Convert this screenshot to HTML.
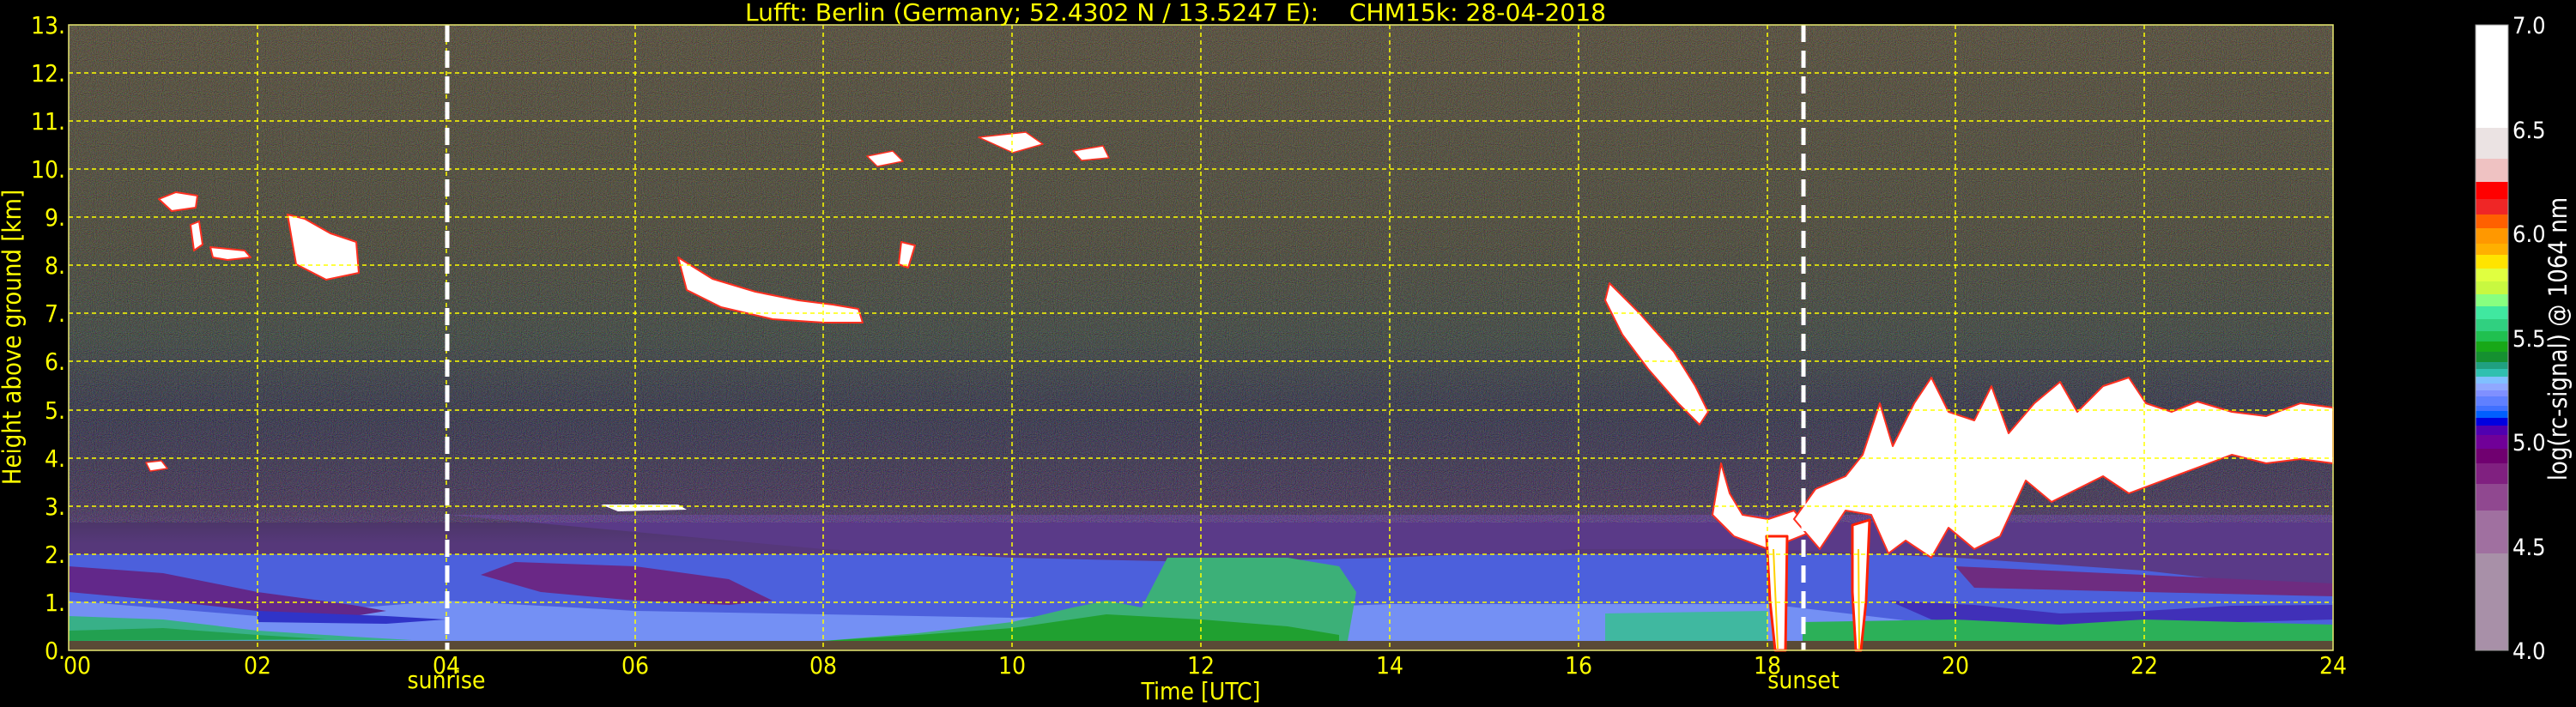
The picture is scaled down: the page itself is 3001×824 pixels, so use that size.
<!DOCTYPE html>
<html><head><meta charset="utf-8"><style>
html,body{margin:0;padding:0;background:#000;}
svg{display:block;}
text{font-family:"DejaVu Sans Condensed","DejaVu Sans","Liberation Sans",sans-serif;}
</style></head><body>
<svg width="3001" height="824" viewBox="0 0 3001 824" xmlns="http://www.w3.org/2000/svg">
<defs>
<linearGradient id="bg" x1="0" y1="29" x2="0" y2="758" gradientUnits="userSpaceOnUse">
<stop offset="0" stop-color="#544c38"/>
<stop offset="0.35" stop-color="#4a4838"/>
<stop offset="0.5" stop-color="#3e4640"/>
<stop offset="0.62" stop-color="#34344a"/>
<stop offset="0.76" stop-color="#423456"/>
<stop offset="0.83" stop-color="#56387a"/>
<stop offset="1" stop-color="#56387a"/>
</linearGradient>
<filter id="nz" x="0" y="0" width="100%" height="100%">
<feTurbulence type="fractalNoise" baseFrequency="0.95" numOctaves="1" seed="3"/>
<feColorMatrix type="matrix" values="3 0 0 0 -1.2  0 3 0 0 -1.2  0 0 3 0 -1.2  0 0 0 0 0.18"/>
</filter>
</defs>

<rect x="80" y="29" width="2638" height="729" fill="url(#bg)"/>

<!-- blue layer 0.2-2 km -->
<polygon fill="#4c60dc" points="80,646 2718,646 2718,747 80,747"/>
<polygon fill="#5a3a88" points="80,600 520,600 740,620 959,640 1179,650 1399,655 1619,650 1839,640 2059,640 2278,650 2498,665 2718,690 2718,600"/>
<polygon fill="#7490f4" points="80,700 300,718 520,700 740,712 959,716 1179,720 1619,704 1839,704 2059,704 2278,730 2718,730 2718,747 80,747"/>
<polygon fill="#62288a" points="80,660 190,668 300,690 410,705 450,712 400,720 300,712 190,700 80,690"/>
<polygon fill="#6a2886" points="600,655 740,660 849,675 900,700 849,705 740,700 630,690 560,670"/>
<polygon fill="#3034c8" points="300,712 450,718 520,722 450,727 300,725"/>
<polygon fill="#4030b8" points="2200,700 2300,705 2400,715 2498,712 2600,706 2718,705 2718,722 2500,728 2350,730 2250,722"/>
<polygon fill="#6e2c80" points="2278,660 2718,680 2718,695 2500,690 2300,685"/>

<polygon fill="#38b088" points="80,718 190,722 300,735 410,742 480,746 80,747"/>
<polygon fill="#22a050" points="80,735 190,732 300,740 380,745 80,747"/>
<polygon fill="#3cb078" points="959,747 1069,738 1179,725 1250,708 1289,700 1330,708 1360,650 1500,650 1560,660 1580,690 1570,747"/>
<polygon fill="#20a030" points="959,747 1069,740 1179,732 1289,716 1400,722 1500,730 1560,740 1560,747"/>
<polygon fill="#40b8a0" points="1870,747 1870,715 2059,712 2059,747"/>
<polygon fill="#2cb058" points="2100,747 2100,725 2278,722 2400,728 2498,722 2718,728 2718,747"/>

<rect x="80" y="747" width="2638" height="11" fill="#5a4a36"/>

<rect x="80" y="29" width="2638" height="580" filter="url(#nz)"/>

<g fill="#ffffff" stroke="#ff3020" stroke-width="2" stroke-linejoin="round">
<polygon points="185,232 205,224 230,228 228,242 200,246"/>
<polygon points="222,262 232,258 236,285 226,292"/>
<polygon points="245,288 285,292 292,300 265,303 248,300"/>
<polygon points="335,250 355,255 385,272 415,282 418,318 380,326 345,308"/>
<polygon points="790,300 830,325 880,340 930,350 970,355 1000,360 1005,376 960,376 900,372 840,358 800,338"/>
<polygon points="1050,282 1066,286 1058,312 1047,308"/>
<polygon points="1010,182 1040,176 1052,188 1022,194" stroke-width="1.5"/>
<polygon points="1140,160 1195,154 1215,168 1180,178" stroke-width="1.5"/>
<polygon points="1250,176 1285,170 1292,184 1260,187" stroke-width="1.5"/>
<polygon points="170,539 188,537 195,546 175,549" stroke-width="1.5"/>
<polygon points="1875,330 1910,365 1950,410 1975,450 1990,480 1980,495 1955,470 1920,430 1890,390 1870,350"/>
<polygon points="2005,540 2015,575 2030,600 2060,605 2090,595 2110,620 2060,640 2020,625 1995,600"/>
<polygon points="2090,605 2115,570 2150,555 2170,530 2190,470 2205,520 2230,470 2250,440 2270,480 2300,490 2320,450 2340,505 2370,470 2400,445 2420,480 2450,450 2480,440 2500,470 2530,480 2560,468 2600,480 2640,485 2680,470 2718,475 2718,540 2680,535 2640,540 2600,530 2560,545 2520,560 2480,575 2450,555 2420,570 2390,585 2360,560 2330,625 2300,640 2270,615 2250,650 2220,630 2200,645 2180,600 2150,595 2120,640"/>
<polygon points="2058,625 2082,625 2080,758 2068,758 2062,700" stroke="#ff2000" stroke-width="3"/>
<polygon points="2158,612 2178,606 2174,700 2168,758 2162,758 2158,690" stroke="#ff2000" stroke-width="3"/>
</g>
<g stroke="#ffd000" stroke-width="2" fill="none">
<line x1="2066" y1="640" x2="2071" y2="756"/>
<line x1="2165" y1="640" x2="2166" y2="756"/>
</g>
<polygon fill="#ffffff" points="700,588 790,588 800,594 720,596"/>

<g stroke="#ffff00" stroke-width="1.5" stroke-dasharray="5,4">
<line x1="80" y1="85" x2="2718" y2="85"/>
<line x1="80" y1="141" x2="2718" y2="141"/>
<line x1="80" y1="197" x2="2718" y2="197"/>
<line x1="80" y1="253" x2="2718" y2="253"/>
<line x1="80" y1="309" x2="2718" y2="309"/>
<line x1="80" y1="365" x2="2718" y2="365"/>
<line x1="80" y1="421" x2="2718" y2="421"/>
<line x1="80" y1="478" x2="2718" y2="478"/>
<line x1="80" y1="534" x2="2718" y2="534"/>
<line x1="80" y1="590" x2="2718" y2="590"/>
<line x1="80" y1="646" x2="2718" y2="646"/>
<line x1="80" y1="702" x2="2718" y2="702"/>
<line x1="300" y1="29" x2="300" y2="758"/>
<line x1="520" y1="29" x2="520" y2="758"/>
<line x1="740" y1="29" x2="740" y2="758"/>
<line x1="959" y1="29" x2="959" y2="758"/>
<line x1="1179" y1="29" x2="1179" y2="758"/>
<line x1="1399" y1="29" x2="1399" y2="758"/>
<line x1="1619" y1="29" x2="1619" y2="758"/>
<line x1="1839" y1="29" x2="1839" y2="758"/>
<line x1="2059" y1="29" x2="2059" y2="758"/>
<line x1="2278" y1="29" x2="2278" y2="758"/>
<line x1="2498" y1="29" x2="2498" y2="758"/>
</g>
<g stroke="#ffffff" stroke-width="5" stroke-dasharray="20,10">
<line x1="521" y1="29" x2="521" y2="758"/>
<line x1="2101" y1="29" x2="2101" y2="758"/>
</g>
<rect x="80" y="29" width="2638" height="729" fill="none" stroke="#e8e870" stroke-width="1.5"/>

<text x="868" y="24" font-size="28" fill="#ffff00" textLength="1003" lengthAdjust="spacingAndGlyphs" style="white-space:pre">Lufft: Berlin (Germany; 52.4302 N / 13.5247 E):    CHM15k: 28-04-2018</text>

<g font-size="28" fill="#ffff00" text-anchor="end">
<text x="76" y="39">13.</text>
<text x="76" y="95">12.</text>
<text x="76" y="151">11.</text>
<text x="76" y="207">10.</text>
<text x="76" y="263">9.</text>
<text x="76" y="319">8.</text>
<text x="76" y="375">7.</text>
<text x="76" y="431">6.</text>
<text x="76" y="488">5.</text>
<text x="76" y="544">4.</text>
<text x="76" y="600">3.</text>
<text x="76" y="656">2.</text>
<text x="76" y="712">1.</text>
<text x="76" y="768">0.</text>
</g>
<text transform="translate(24,393) rotate(-90)" font-size="29" fill="#ffff00" text-anchor="middle">Height above ground [km]</text>

<g font-size="28" fill="#ffff00" text-anchor="middle">
<text x="90" y="785">00</text>
<text x="300" y="785">02</text>
<text x="520" y="785">04</text>
<text x="740" y="785">06</text>
<text x="959" y="785">08</text>
<text x="1179" y="785">10</text>
<text x="1399" y="785">12</text>
<text x="1619" y="785">14</text>
<text x="1839" y="785">16</text>
<text x="2059" y="785">18</text>
<text x="2278" y="785">20</text>
<text x="2498" y="785">22</text>
<text x="2718" y="785">24</text>
<text x="520" y="802">sunrise</text>
<text x="2101" y="802">sunset</text>
<text x="1399" y="815">Time [UTC]</text>
</g>

<g>
<rect x="2884" y="29" width="38" height="120" fill="#ffffff"/>
<rect x="2884" y="149" width="38" height="36" fill="#ebe3e3"/>
<rect x="2884" y="185" width="38" height="27" fill="#efc2c2"/>
<rect x="2884" y="212" width="38" height="20" fill="#ff0000"/>
<rect x="2884" y="232" width="38" height="18" fill="#ef2626"/>
<rect x="2884" y="250" width="38" height="16" fill="#ff6000"/>
<rect x="2884" y="266" width="38" height="18" fill="#ff9800"/>
<rect x="2884" y="284" width="38" height="13" fill="#ffb000"/>
<rect x="2884" y="297" width="38" height="16" fill="#ffe400"/>
<rect x="2884" y="313" width="38" height="15" fill="#e0ff40"/>
<rect x="2884" y="328" width="38" height="15" fill="#c8f840"/>
<rect x="2884" y="343" width="38" height="14" fill="#88ff80"/>
<rect x="2884" y="357" width="38" height="15" fill="#40e8a0"/>
<rect x="2884" y="372" width="38" height="14" fill="#30d080"/>
<rect x="2884" y="386" width="38" height="12" fill="#20c050"/>
<rect x="2884" y="398" width="38" height="12" fill="#18a818"/>
<rect x="2884" y="410" width="38" height="12" fill="#159030"/>
<rect x="2884" y="422" width="38" height="8" fill="#20a080"/>
<rect x="2884" y="430" width="38" height="9" fill="#30c0b0"/>
<rect x="2884" y="439" width="38" height="8" fill="#80c0ff"/>
<rect x="2884" y="447" width="38" height="8" fill="#90a8ff"/>
<rect x="2884" y="455" width="38" height="7" fill="#8090ff"/>
<rect x="2884" y="462" width="38" height="11" fill="#6080ff"/>
<rect x="2884" y="473" width="38" height="6" fill="#4070ff"/>
<rect x="2884" y="479" width="38" height="8" fill="#0060ff"/>
<rect x="2884" y="487" width="38" height="9" fill="#0000e0"/>
<rect x="2884" y="496" width="38" height="11" fill="#5000b0"/>
<rect x="2884" y="507" width="38" height="16" fill="#700098"/>
<rect x="2884" y="523" width="38" height="17" fill="#700070"/>
<rect x="2884" y="540" width="38" height="24" fill="#802080"/>
<rect x="2884" y="564" width="38" height="31" fill="#904890"/>
<rect x="2884" y="595" width="38" height="50" fill="#a070a0"/>
<rect x="2884" y="645" width="38" height="113" fill="#a890a8"/>
<rect x="2884" y="29" width="38" height="729" fill="none" stroke="#999" stroke-width="1"/>
</g>
<g font-size="27" fill="#ffffff" style="font-family:'DejaVu Sans',sans-serif">
<text x="2927" y="39">7.0</text>
<text x="2927" y="161">6.5</text>
<text x="2927" y="282">6.0</text>
<text x="2927" y="404">5.5</text>
<text x="2927" y="525">5.0</text>
<text x="2927" y="647">4.5</text>
<text x="2927" y="768">4.0</text>
</g>
<text transform="translate(2990,395) rotate(-90)" font-size="29" fill="#ffffff" text-anchor="middle">log(rc-signal) @ 1064 nm</text>
</svg>
</body></html>
